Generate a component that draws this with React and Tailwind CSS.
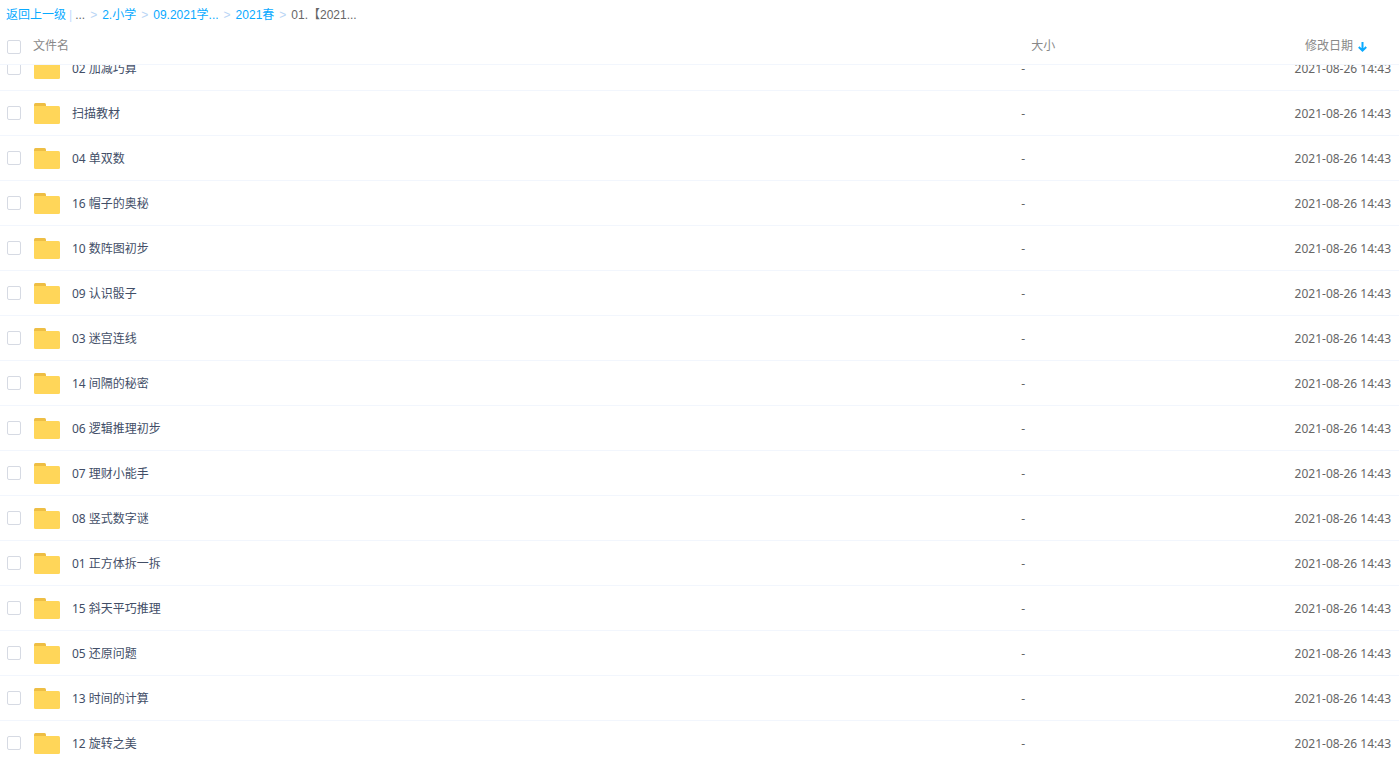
import { useLayoutEffect, useRef } from 'react';

const MODIFIED = '2021-08-26 14:43';

const FOLDERS = [
  '02 加减巧算',
  '扫描教材',
  '04 单双数',
  '16 帽子的奥秘',
  '10 数阵图初步',
  '09 认识骰子',
  '03 迷宫连线',
  '14 间隔的秘密',
  '06 逻辑推理初步',
  '07 理财小能手',
  '08 竖式数字谜',
  '01 正方体拆一拆',
  '15 斜天平巧推理',
  '05 还原问题',
  '13 时间的计算',
  '12 旋转之美',
];

const TRAIL = ['2.小学', '09.2021学...', '2021春'];

function FolderIcon() {
  return (
    <svg width="26" height="21" viewBox="0 0 26 21" className="shrink-0" aria-hidden="true">
      <path d="M1.5 0H10.5Q12 0 12 1.5V6H0V1.5Q0 0 1.5 0Z" fill="#eebe44" />
      <path d="M0 3H24.5Q26 3 26 4.5V19.5Q26 21 24.5 21H1.5Q0 21 0 19.5Z" fill="#ffd659" />
    </svg>
  );
}

function SortArrow() {
  return (
    <svg width="9" height="10" viewBox="0 0 9 10" fill="none" stroke="#09aaff" strokeWidth="2" aria-hidden="true">
      <path d="M4.5 0V8.5M0.8 5L4.5 8.6L8.2 5" />
    </svg>
  );
}

function Tick({ label }) {
  return (
    <input
      type="checkbox"
      aria-label={label}
      className="size-3.5 shrink-0 appearance-none rounded-xs border border-[#d6dae3] bg-white checked:bg-[#09aaff]"
    />
  );
}

function Separator() {
  return <span className="text-[#b9d5f5]">&gt;</span>;
}

function Breadcrumb() {
  return (
    <nav className="flex h-[30px] shrink-0 items-center gap-[5px] px-1.5 font-['Liberation_Sans','Noto_Sans_CJK_SC',sans-serif] text-[#666]">
      <span className="flex gap-[3px]">
        <a href="#up" className="text-[#09aaff]">返回上一级</a>
        <span className="text-[#c4dbfe]">|</span>
        <span>...</span>
      </span>
      {TRAIL.map((name) => (
        <span key={name} className="flex gap-[5px]">
          <Separator />
          <a href={`#${name}`} className="text-[#09aaff]">{name}</a>
        </span>
      ))}
      <span className="flex gap-[5px]">
        <Separator />
        <span>01.【2021...</span>
      </span>
    </nav>
  );
}

export default function App() {
  const scroller = useRef(null);

  useLayoutEffect(() => {
    scroller.current.scrollTop = 19;
  }, []);

  return (
    <div className="flex h-screen flex-col bg-white font-['Noto_Sans','Noto_Sans_CJK_SC',sans-serif] text-[12px] leading-4">
      <Breadcrumb />
      <div ref={scroller} className="min-h-0 flex-1 overflow-y-auto [scrollbar-width:none]">
        <table className="w-full table-fixed border-separate border-spacing-0 text-left">
          <thead className="sticky top-0 bg-white text-[#888]">
            <tr className="h-[35px]">
              <th scope="col" className="w-[73%] border-b border-[#f2f6fd] p-0 pl-[7px] font-normal">
                <span className="flex items-center gap-3">
                  <Tick label="全选" />
                  <span className="pb-0.5">文件名</span>
                </span>
              </th>
              <th scope="col" className="w-[13%] border-b border-[#f2f6fd] p-0 pb-0.5 pl-2.5 font-normal">大小</th>
              <th scope="col" className="border-b border-[#f2f6fd] p-0 pr-8 font-normal">
                <button type="button" className="ml-auto flex items-center gap-[5px]">
                  <span className="pb-0.5">修改日期</span>
                  <SortArrow />
                </button>
              </th>
            </tr>
          </thead>
          <tbody>
            {FOLDERS.map((name) => (
              <tr key={name} className="h-[45px]">
                <td className="border-b border-[#f2f6fd] p-0 pl-[7px] text-[#424e67]">
                  <span className="flex items-center">
                    <Tick label={name} />
                    <span className="ml-[13px] flex items-center gap-3">
                      <FolderIcon />
                      <a href={`#${name}`} className="pt-0.5">{name}</a>
                    </span>
                  </span>
                </td>
                <td className="border-b border-[#f2f6fd] p-0 pt-0.5 text-[#666]">-</td>
                <td className="border-b border-[#f2f6fd] p-0 pt-0.5 pr-2 text-right text-[#666]">{MODIFIED}</td>
              </tr>
            ))}
          </tbody>
        </table>
      </div>
    </div>
  );
}
